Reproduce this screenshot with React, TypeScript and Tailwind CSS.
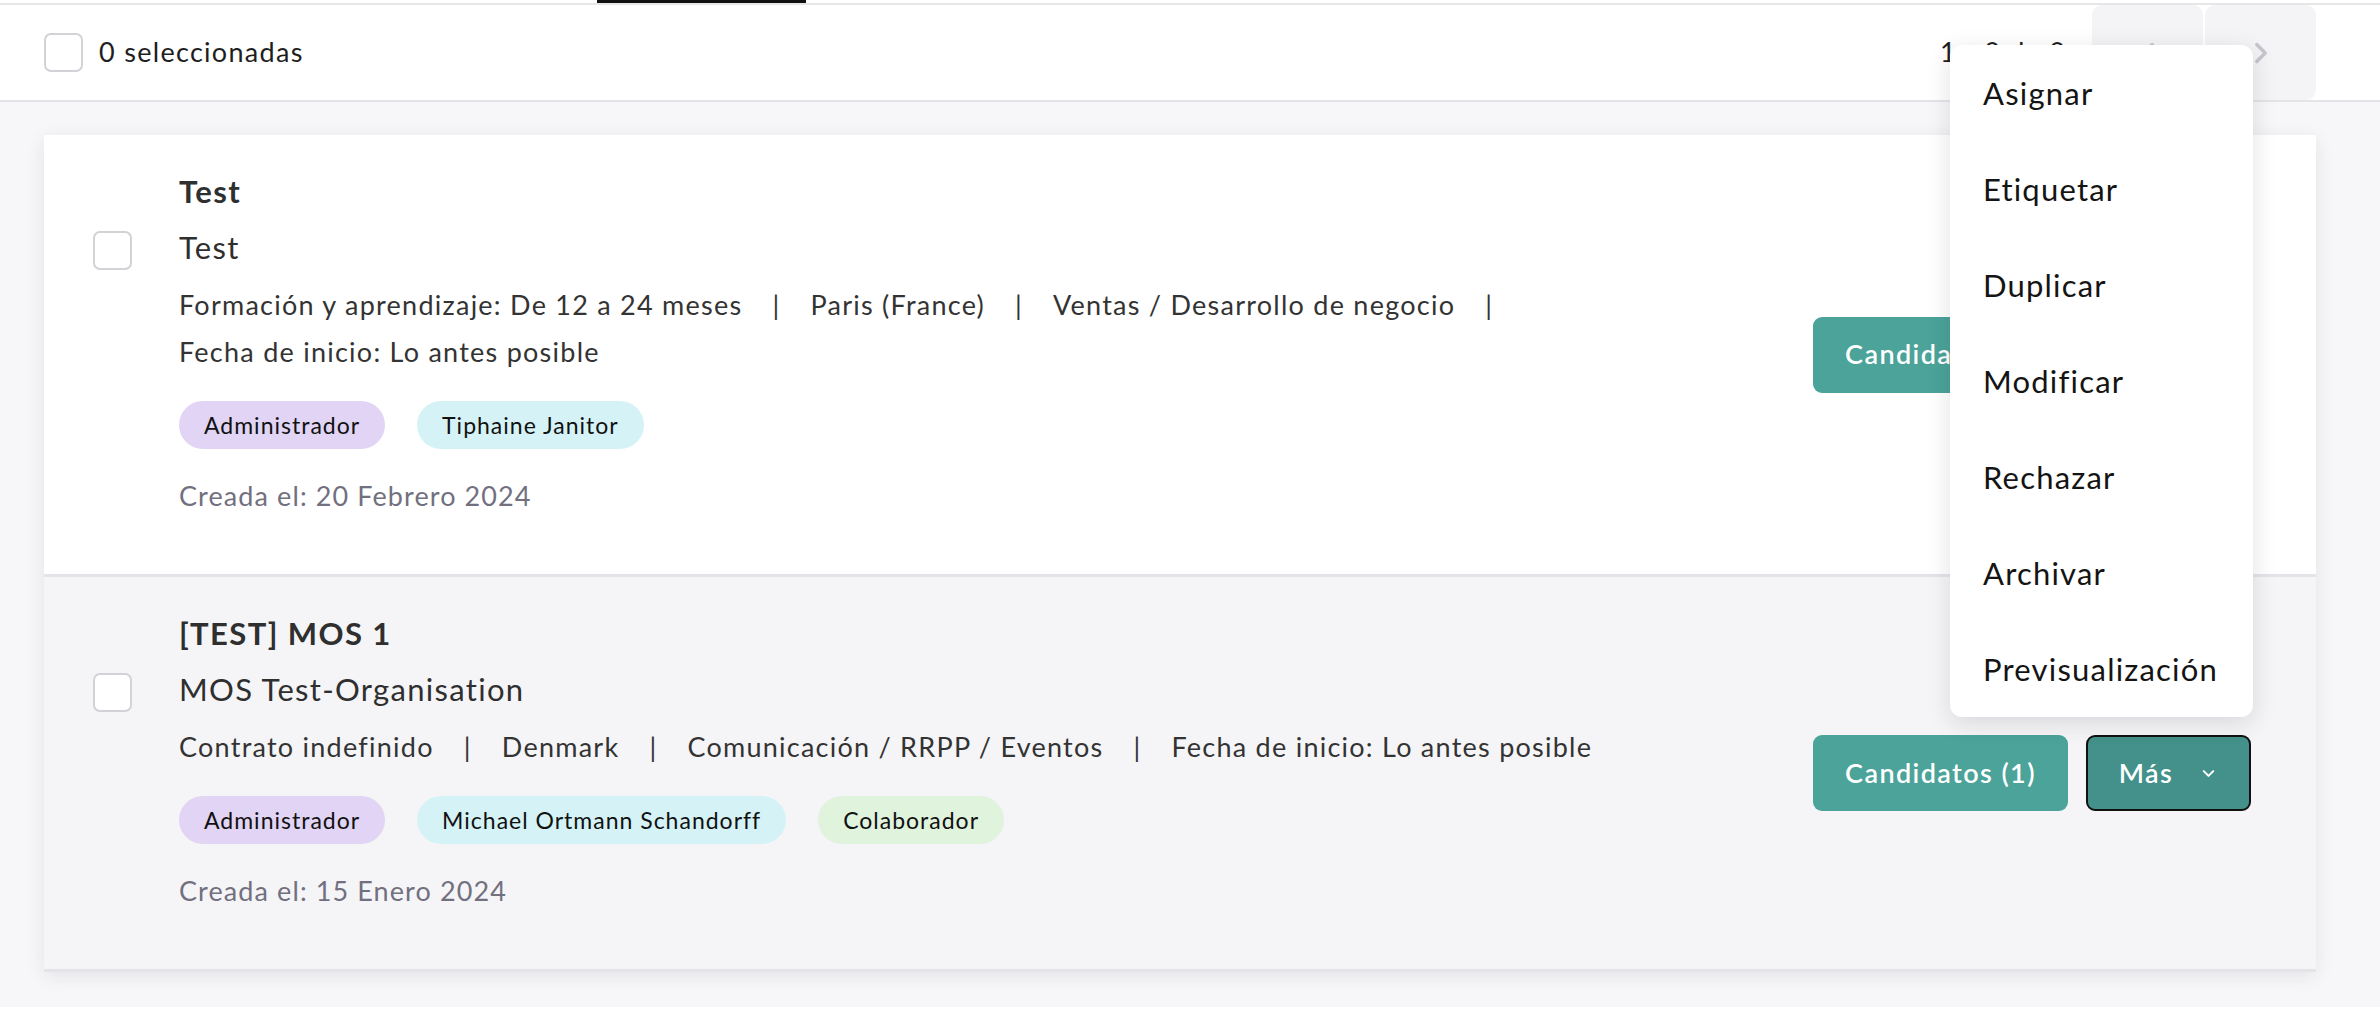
import { ChevronDown, ChevronLeft, ChevronRight } from 'lucide-react';

interface Tag {
  label: string;
  tone: 'role' | 'owner' | 'collab';
}

interface Offer {
  id: string;
  title: string;
  org: string;
  details: string[];
  tags: Tag[];
  created: string;
  candidates: number;
  active?: boolean;
}

const TAG_TONES: Record<Tag['tone'], string> = {
  role: 'bg-[#e1d4f5]',
  owner: 'bg-[#d5f3f6]',
  collab: 'bg-[#dff3dd]',
};

const MENU_ITEMS = [
  'Asignar',
  'Etiquetar',
  'Duplicar',
  'Modificar',
  'Rechazar',
  'Archivar',
  'Previsualización',
];

const OFFERS: Offer[] = [
  {
    id: 'o1',
    title: 'Test',
    org: 'Test',
    details: [
      'Formación y aprendizaje: De 12 a 24 meses',
      'Paris (France)',
      'Ventas / Desarrollo de negocio',
      'Fecha de inicio: Lo antes posible',
    ],
    tags: [
      { label: 'Administrador', tone: 'role' },
      { label: 'Tiphaine Janitor', tone: 'owner' },
    ],
    created: 'Creada el: 20 Febrero 2024',
    candidates: 0,
  },
  {
    id: 'o2',
    title: '[TEST] MOS 1',
    org: 'MOS Test-Organisation',
    details: [
      'Contrato indefinido',
      'Denmark',
      'Comunicación / RRPP / Eventos',
      'Fecha de inicio: Lo antes posible',
    ],
    tags: [
      { label: 'Administrador', tone: 'role' },
      { label: 'Michael Ortmann Schandorff', tone: 'owner' },
      { label: 'Colaborador', tone: 'collab' },
    ],
    created: 'Creada el: 15 Enero 2024',
    candidates: 1,
    active: true,
  },
];

function Checkbox({ className = '' }: { className?: string }) {
  return (
    <div
      className={`h-[39px] w-[39px] shrink-0 rounded-[7px] border-2 border-[#d2d2d7] bg-white ${className}`}
    />
  );
}

function ActionsMenu() {
  return (
    <div className="absolute bottom-[calc(100%+18px)] right-[-2px] z-20 w-[303px] rounded-[12px] bg-white shadow-[0_6px_24px_rgba(20,20,40,0.13)]">
      {MENU_ITEMS.map((item) => (
        <div
          key={item}
          className="flex h-[96px] items-center px-[33px] text-[31px] tracking-[1.2px] text-[#141414]"
        >
          {item}
        </div>
      ))}
    </div>
  );
}

function OfferRow({ offer }: { offer: Offer }) {
  return (
    <div
      className={`flex border-b-[3px] border-[#e4e4e8] pl-[49px] pr-[65px] ${
        offer.active ? 'bg-[#f5f5f7]' : 'bg-white'
      }`}
    >
      <div className="flex min-w-0 flex-1 items-start pt-[38px] pb-[58px]">
        <Checkbox className="mt-[58px]" />
        <div className="ml-[47px] min-w-0 flex-1 pr-[50px]">
          <div className="text-[31px] font-bold leading-[36px] tracking-[1.4px] text-[#2f2f2f]">
            {offer.title}
          </div>
          <div className="mt-[18px] text-[31px] leading-[40px] tracking-[1.3px] text-[#2f2f2f]">
            {offer.org}
          </div>
          <div className="mt-[14px] flex flex-wrap items-center text-[27px] leading-[47px] tracking-[1.25px] text-[#333]">
            {offer.details.map((d, i) => (
              <span key={d} className="whitespace-nowrap">
                {d}
                {i < offer.details.length - 1 && <span className="mx-[30px]">|</span>}
              </span>
            ))}
          </div>
          <div className="mt-[26px] flex flex-wrap gap-[32px]">
            {offer.tags.map((t) => (
              <span
                key={t.label}
                className={`flex h-[48px] items-center rounded-full px-[25px] text-[23px] tracking-[1px] text-[#111] ${TAG_TONES[t.tone]}`}
              >
                {t.label}
              </span>
            ))}
          </div>
          <div className="mt-[27px] text-[27px] leading-[40px] tracking-[1.1px] text-[#72707f]">
            {offer.created}
          </div>
        </div>
      </div>
      <div className="flex items-center gap-[18px]">
        <button className="flex h-[76px] w-[255px] items-center justify-center rounded-[9px] bg-[#4ba399] text-[27px] font-semibold tracking-[1.4px] text-white">
          Candidatos ({offer.candidates})
        </button>
        <div className="relative">
          <button
            className={`flex h-[76px] w-[165px] items-center justify-center gap-[26px] rounded-[9px] text-[27px] font-semibold tracking-[1.4px] text-white ${
              offer.active ? 'border-2 border-[#111] bg-[#43918a]' : 'bg-[#4ba399]'
            }`}
          >
            Más
            <ChevronDown size={19} strokeWidth={2.6} />
          </button>
          {offer.active && <ActionsMenu />}
        </div>
      </div>
    </div>
  );
}

export default function App() {
  return (
    <div className="flex h-[1016px] w-full flex-col bg-white [font-family:Lato,'Noto_Sans',sans-serif]">
      <div className="h-[3px] shrink-0">
        <div className="ml-[597px] h-[3px] w-[209px] bg-[#111]" />
      </div>
      <div className="h-[2px] shrink-0 bg-[#e6e6e9]" />
      <div className="flex h-[97px] shrink-0 items-center border-b-2 border-[#e4e4e8] bg-white pl-[44px] pr-[64px]">
        <Checkbox />
        <span className="ml-[16px] text-[27px] tracking-[1.3px] text-[#1e1e1e]">0 seleccionadas</span>
        <div className="ml-auto flex h-full items-center">
          <span className="mr-[26px] text-[27px] tracking-[1.2px] text-[#1e1e1e]">1 - 2 de 2</span>
          <div className="flex h-full gap-[2px]">
            <button className="flex w-[111px] items-center justify-center rounded-[10px] bg-[#f4f4f6] text-[#c6c6cc]">
              <ChevronLeft size={34} strokeWidth={2.4} />
            </button>
            <button className="flex w-[111px] items-center justify-center rounded-[10px] bg-[#f4f4f6] text-[#c6c6cc]">
              <ChevronRight size={34} strokeWidth={2.4} />
            </button>
          </div>
        </div>
      </div>
      <div className="bg-[#f7f7f9] pl-[44px] pr-[64px] pt-[33px] pb-[35px]">
        <div className="shadow-[0_4px_18px_rgba(30,30,50,0.09)]">
          {OFFERS.map((o) => (
            <OfferRow key={o.id} offer={o} />
          ))}
        </div>
      </div>
    </div>
  );
}
